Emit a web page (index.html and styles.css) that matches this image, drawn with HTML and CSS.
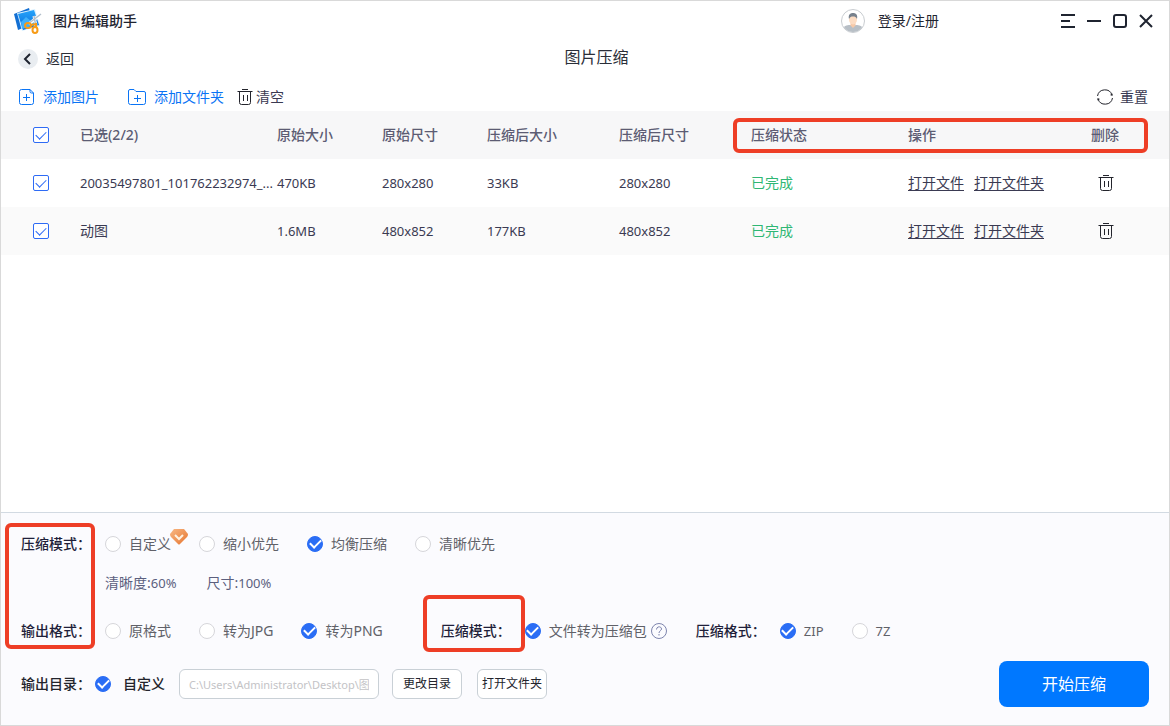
FILE: index.html
```html
<!DOCTYPE html>
<html lang="zh-CN">
<head>
<meta charset="utf-8">
<title>图片编辑助手</title>
<link rel="stylesheet" href="styles.css">
</head>
<body>
<svg class="defs" aria-hidden="true">
  <symbol id="trash" viewBox="0 0 16 16"><path d="M5 .5h6M.5 2.500h15M2.500 2.500v11a2 2 0 0 0 2 2h7a2 2 0 0 0 2-2v-11M6.500 6v6M10.500 6v6" fill="none" stroke="#23242c"/></symbol>
</svg>
<div class="window">
  <header class="titlebar">
    <svg class="logo" viewBox="0 0 28 26" aria-hidden="true">
      <defs><linearGradient id="photo" x1="0" y1="0" x2="0" y2="1"><stop offset="0" stop-color="#25a4fb"/><stop offset="1" stop-color="#0869d8"/></linearGradient></defs>
      <path d="M0 6 15 0l4 16-15 6z" fill="#126fd3"/>
      <path d="M3 5 21 1l5 17-18 5z" fill="#d7efff"/>
      <path d="M4 6 20 2l5 15-16 5z" fill="url(#photo)"/>
      <path d="m7 14 5-5 5 4 3-3 4 6-16 5z" fill="#3fb0fb"/>
      <path d="m27 6-12 10M20 8l2 10" stroke="#fff" stroke-width="3"/>
      <path d="m27 6-13 10M20 8l2 11" stroke="#b4c0cc" stroke-width="1.500"/>
      <ellipse cx="14" cy="17.500" rx="3" ry="2.500" fill="none" stroke="#f79b16" stroke-width="2"/>
      <ellipse cx="21" cy="22" rx="2.500" ry="3" fill="none" stroke="#f79b16" stroke-width="2"/>
      <path d="m17 17 5-1v3" fill="none" stroke="#f79b16" stroke-width="2"/>
    </svg>
    <h1 class="app-name">图片编辑助手</h1>
    <button class="plain account">
      <svg class="avatar" viewBox="0 0 24 24" aria-hidden="true">
        <defs><clipPath id="face"><circle cx="12" cy="12" r="11"/></clipPath></defs>
        <circle cx="12" cy="12" r="11.500" fill="#fff" stroke="#c8ccd0"/>
        <g clip-path="url(#face)"><path d="M1 24v-3c1-4 5-5 8-5h6c3 0 7 1 8 5v3z" fill="#b8bfc6"/><path d="M9.500 13h5v3.500L12 19l-2.500-2.500z" fill="#f6c9a9"/><ellipse cx="12" cy="10.500" rx="4" ry="5" fill="#fcdcc3"/><path d="M8 10c-1-4 1-6 4-6s5 2 4 6c-1-2-2-2.500-4-2.500S9 8 8 10z" fill="#77818c"/></g>
      </svg>
      <span>登录/注册</span>
    </button>
    <div class="window-controls">
      <button class="plain" aria-label="菜单"><svg viewBox="0 0 14 14"><path d="M0 1h14M0 7h9M0 13h14" stroke="#1f2430" stroke-width="2"/></svg></button>
      <button class="plain" aria-label="最小化"><svg viewBox="0 0 14 14"><path d="M0 7h14" stroke="#1f2430" stroke-width="2"/></svg></button>
      <button class="plain" aria-label="最大化"><svg viewBox="0 0 14 14"><rect x="1" y="1" width="12" height="12" rx="2" fill="none" stroke="#1f2430" stroke-width="2"/></svg></button>
      <button class="plain" aria-label="关闭"><svg viewBox="0 0 14 14"><path d="m1 1 12 12M13 1 1 13" stroke="#1f2430" stroke-width="2"/></svg></button>
    </div>
  </header>

  <nav class="nav">
    <button class="plain back">
      <svg viewBox="0 0 20 20" aria-hidden="true"><circle cx="10" cy="10" r="10" fill="#e9edf1"/><path d="m12 5-5 5 5 5" fill="none" stroke="#1f2430" stroke-width="2"/></svg>
      <span>返回</span>
    </button>
    <h2 class="page-title">图片压缩</h2>
  </nav>

  <div class="toolbar">
    <button class="plain tool tool-blue">
      <svg class="icon-trash" viewBox="0 0 16 16" aria-hidden="true"><path d="M11 .5H2.500a2 2 0 0 0-2 2v11a2 2 0 0 0 2 2h10a2 2 0 0 0 2-2V4zV2.500a1.500 1.500 0 0 0 1.500 1.500h2M7.500 5v7M4 8.500h7" fill="none" stroke="#0a74f5"/></svg>
      <span>添加图片</span>
    </button>
    <button class="plain tool tool-blue">
      <svg class="icon-folder" viewBox="0 0 18 16" aria-hidden="true"><path d="M.5 13.500V2A1.500 1.500 0 0 1 2 .5h4l2 2h8a1.500 1.500 0 0 1 1.500 1.500v9.500a2 2 0 0 1-2 2h-13a2 2 0 0 1-2-2zM9.500 6v7M6 9.500h7" fill="none" stroke="#0a74f5"/></svg>
      <span>添加文件夹</span>
    </button>
    <button class="plain tool tool-clear">
      <svg class="icon-trash" aria-hidden="true"><use href="#trash"/></svg>
      <span>清空</span>
    </button>
    <button class="plain tool tool-reset">
      <svg class="icon-trash" viewBox="0 0 16 16" aria-hidden="true"><path d="M.5 7A7.500 7.500 0 0 1 15 6M15.500 9A7.500 7.500 0 0 1 1 10" fill="none" stroke="#23242c"/><path d="m13 6 2.500 1V4.500zM3 10 .500 9v2.500z" fill="#23242c"/></svg>
      <span>重置</span>
    </button>
  </div>

  <main class="files">
    <table class="file-table">
      <colgroup><col class="c-check"><col><col class="c-size"><col class="c-size"><col class="c-out"><col class="c-out"><col class="c-status"><col class="c-actions"><col class="c-delete"></colgroup>
      <thead>
        <tr><th class="check-cell"><input class="tick" type="checkbox" checked aria-label="全选"></th><th>已选(2/2)</th><th>原始大小</th><th>原始尺寸</th><th>压缩后大小</th><th>压缩后尺寸</th><th>压缩状态</th><th>操作</th><th>删除</th></tr>
      </thead>
      <tbody>
        <tr>
          <td class="check-cell"><input class="tick" type="checkbox" checked aria-label="选择 20035497801"></td>
          <td class="num">20035497801_101762232974_...</td><td class="num">470KB</td><td class="num">280x280</td><td class="num">33KB</td><td class="num">280x280</td>
          <td class="done">已完成</td>
          <td><div class="links"><a href="#">打开文件</a><a href="#">打开文件夹</a></div></td>
          <td><button class="plain remove" aria-label="删除"><svg class="icon-trash"><use href="#trash"/></svg></button></td>
        </tr>
        <tr>
          <td class="check-cell"><input class="tick" type="checkbox" checked aria-label="选择 动图"></td>
          <td>动图</td><td class="num">1.6MB</td><td class="num">480x852</td><td class="num">177KB</td><td class="num">480x852</td>
          <td class="done">已完成</td>
          <td><div class="links"><a href="#">打开文件</a><a href="#">打开文件夹</a></div></td>
          <td><button class="plain remove" aria-label="删除"><svg class="icon-trash"><use href="#trash"/></svg></button></td>
        </tr>
      </tbody>
    </table>
    <div class="mark mark-columns"></div>
  </main>

  <form class="settings">
    <div class="row">
      <span class="row-label">压缩模式：</span>
      <div class="options">
        <label class="option"><input class="dot" type="radio" name="mode"><span>自定义</span>
          <svg class="vip" viewBox="0 0 18 16" aria-hidden="true"><defs><linearGradient id="gem" x1="0" y1="0" x2="1" y2="1"><stop offset="0" stop-color="#f8b884"/><stop offset="1" stop-color="#e6752f"/></linearGradient></defs><path d="M4 0h10l4 5q0 2-1 3l-7 7q-1 1-2 0L1 8Q0 7 0 5z" fill="url(#gem)"/><path d="m5 6 4 4 4-4" fill="none" stroke="#fff3e2" stroke-width="2"/></svg>
        </label>
        <label class="option"><input class="dot" type="radio" name="mode"><span>缩小优先</span></label>
        <label class="option"><input class="dot" type="radio" name="mode" checked><span>均衡压缩</span></label>
        <label class="option"><input class="dot" type="radio" name="mode"><span>清晰优先</span></label>
      </div>
    </div>
    <div class="row details">
      <span>清晰度:<span class="num">60%</span></span>
      <span>尺寸:<span class="num">100%</span></span>
    </div>
    <div class="row">
      <span class="row-label">输出格式：</span>
      <div class="options">
        <label class="option"><input class="dot" type="radio" name="format"><span>原格式</span></label>
        <label class="option"><input class="dot" type="radio" name="format"><span>转为JPG</span></label>
        <label class="option"><input class="dot" type="radio" name="format" checked><span>转为PNG</span></label>
      </div>
      <span class="row-label label-pack">压缩模式：<span class="mark mark-pack"></span></span>
      <label class="option"><input class="dot" type="checkbox" checked><span>文件转为压缩包</span></label>
      <svg class="help" viewBox="0 0 16 16" role="img" aria-label="帮助"><circle cx="8" cy="8" r="7.500" fill="none" stroke="#7d84ad"/><path d="M5.500 6.500c0-3.500 5-3.500 5-.5 0 1.500-2.500 2-2.500 4M8 11v1.500" fill="none" stroke="#7d84ad"/></svg>
      <span class="row-label label-archive">压缩格式：</span>
      <div class="options">
        <label class="option"><input class="dot" type="radio" name="archive" checked><span class="num">ZIP</span></label>
        <label class="option"><input class="dot" type="radio" name="archive"><span class="num">7Z</span></label>
      </div>
    </div>
    <div class="row row-output">
      <span class="row-label label-output">输出目录：</span>
      <label class="option option-strong"><input class="dot" type="checkbox" checked><span>自定义</span></label>
      <input class="path" type="text" aria-label="输出目录" readonly value="C:\Users\Administrator\Desktop\图片">
      <button class="small" type="button">更改目录</button>
      <button class="small" type="button">打开文件夹</button>
      <button class="start" type="button">开始压缩</button>
    </div>
    <div class="mark mark-labels"></div>
  </form>
</div>
</body>
</html>
```

FILE: styles.css
```css
* { box-sizing: border-box; }
body {
  margin: 0;
  font: 14px/20px "Noto Sans", "Noto Sans CJK SC", sans-serif;
  color: #3a3a52;
  background: #fff;
}
.defs { position: absolute; width: 0; height: 0; }
svg { display: block; flex: none; }
button, input { font: inherit; color: inherit; margin: 0; }
h1, h2 { margin: 0; font-size: 14px; font-weight: 400; }
.plain { border: 0; padding: 0; background: none; display: flex; align-items: center; cursor: pointer; white-space: nowrap; }

.window { min-height: 100vh; display: flex; flex-direction: column; border: 1px solid #d9d9d9; }

.titlebar { height: 40px; display: flex; align-items: center; padding: 0 16px 0 13px; color: #1f2430; }
.logo { width: 28px; height: 26px; margin-right: 11px; }
.app-name { font-weight: 500; }
.account { margin-left: auto; gap: 13px; }
.avatar { width: 24px; height: 24px; }
.window-controls { display: flex; gap: 12px; margin-left: 122px; }
.window-controls svg { width: 14px; height: 14px; }

.nav { height: 36px; display: grid; grid-template-columns: 1fr auto 1fr; align-items: center; padding-left: 17px; color: #2a2e38; }
.back { gap: 8px; }
.back svg { width: 20px; height: 20px; }
.page-title { font-size: 16px; padding-left: 6px; padding-bottom: 4px; }

.toolbar { height: 34px; display: flex; align-items: center; padding: 5px 21px 0 18px; }
.tool { gap: 8px; }
.tool-blue { color: #0a74f5; margin-right: 29px; }
.tool-clear { gap: 3px; margin-left: -16px; }
.tool-reset { gap: 7px; margin-left: auto; }
.icon-trash { width: 16px; height: 16px; }
.icon-folder { width: 18px; height: 16px; }

.files { flex: 1; position: relative; }
.file-table { width: 100%; table-layout: fixed; border-collapse: collapse; }
.file-table th, .file-table td { height: 48px; padding: 0; text-align: left; white-space: nowrap; }
.file-table th { font-weight: 500; color: #5c5c73; background: #f7f7f8; }
.file-table tbody tr:nth-child(even) { background: #fafafa; }
.c-check { width: 79px; }
.c-size { width: 105px; }
.c-out { width: 132px; }
.c-status { width: 157px; }
.c-actions { width: 183px; }
.c-delete { width: 78px; }
.file-table .check-cell { padding-left: 32px; }
.num { font-size: 13px; }
.done { color: #2fb774; }
.links { display: flex; gap: 10px; }
.links a { color: inherit; text-decoration: underline; text-underline-offset: 2px; }
.remove { margin-left: 7px; }

.tick, .dot { appearance: none; display: grid; place-items: center; flex: none; width: 16px; height: 16px; background: #fff; }
.tick { border: 1px solid #2e6bf5; border-radius: 2px; }
.tick:checked::after { content: ""; width: 9px; height: 5px; border: solid #2e6bf5; border-width: 0 0 1px 1px; transform: translateY(-1px) rotate(-45deg); }
.dot { border: 1px solid #d6d6da; border-radius: 50%; }
.dot:checked { border-color: #2a6df5; background: #2a6df5; }
.dot:checked::after { content: ""; width: 9px; height: 5px; border: solid #fff; border-width: 0 0 2px 2px; transform: translateY(-2px) rotate(-45deg); }

.settings { position: relative; padding: 15px 20px 18px; border-top: 1px solid #d2dae2; background: #fbfbfe; }
.row { display: flex; align-items: center; min-height: 32px; white-space: nowrap; }
.row-label { width: 84px; font-weight: 500; color: #1f1f3a; }
.options { display: flex; gap: 28px; }
.option { position: relative; display: flex; align-items: center; gap: 8px; color: #606168; }
.details { margin: 7px 0 16px; padding-left: 84px; gap: 30px; color: #5c5f7e; }
.vip { position: absolute; left: 65px; top: -5px; width: 18px; height: 16px; }
.label-pack { position: relative; margin-left: 58px; }
.help { width: 16px; height: 16px; margin-left: 4px; }
.label-archive { margin-left: 29px; }
.row-output { margin-top: 14px; min-height: 46px; }
.label-output { width: 74px; color: #23242c; }
.option-strong { gap: 12px; font-weight: 500; color: #23242c; }
.path { width: 200px; height: 30px; margin: 0 13px 0 14px; padding: 0 9px; border: 1px solid #c9d0d6; border-radius: 6px; background: #fff; font-size: 11px; color: #c3c3c6; }
.small { width: 70px; height: 30px; margin-right: 15px; padding: 0; border: 1px solid #c9d0d6; border-radius: 6px; background: #fff; font-size: 12px; color: #23242c; }
.start { width: 150px; height: 46px; margin-left: auto; border: 0; border-radius: 8px; background: #0078ff; color: #fff; font-size: 16px; }

.mark { position: absolute; border: 4px solid #ee3e26; border-radius: 6px; pointer-events: none; }
.mark-columns { top: 7px; right: 21px; width: 415px; height: 35px; }
.mark-labels { top: 10px; left: 4px; width: 90px; height: 126px; }
.mark-pack { left: -18px; top: -26px; width: 102px; height: 57px; }
```
